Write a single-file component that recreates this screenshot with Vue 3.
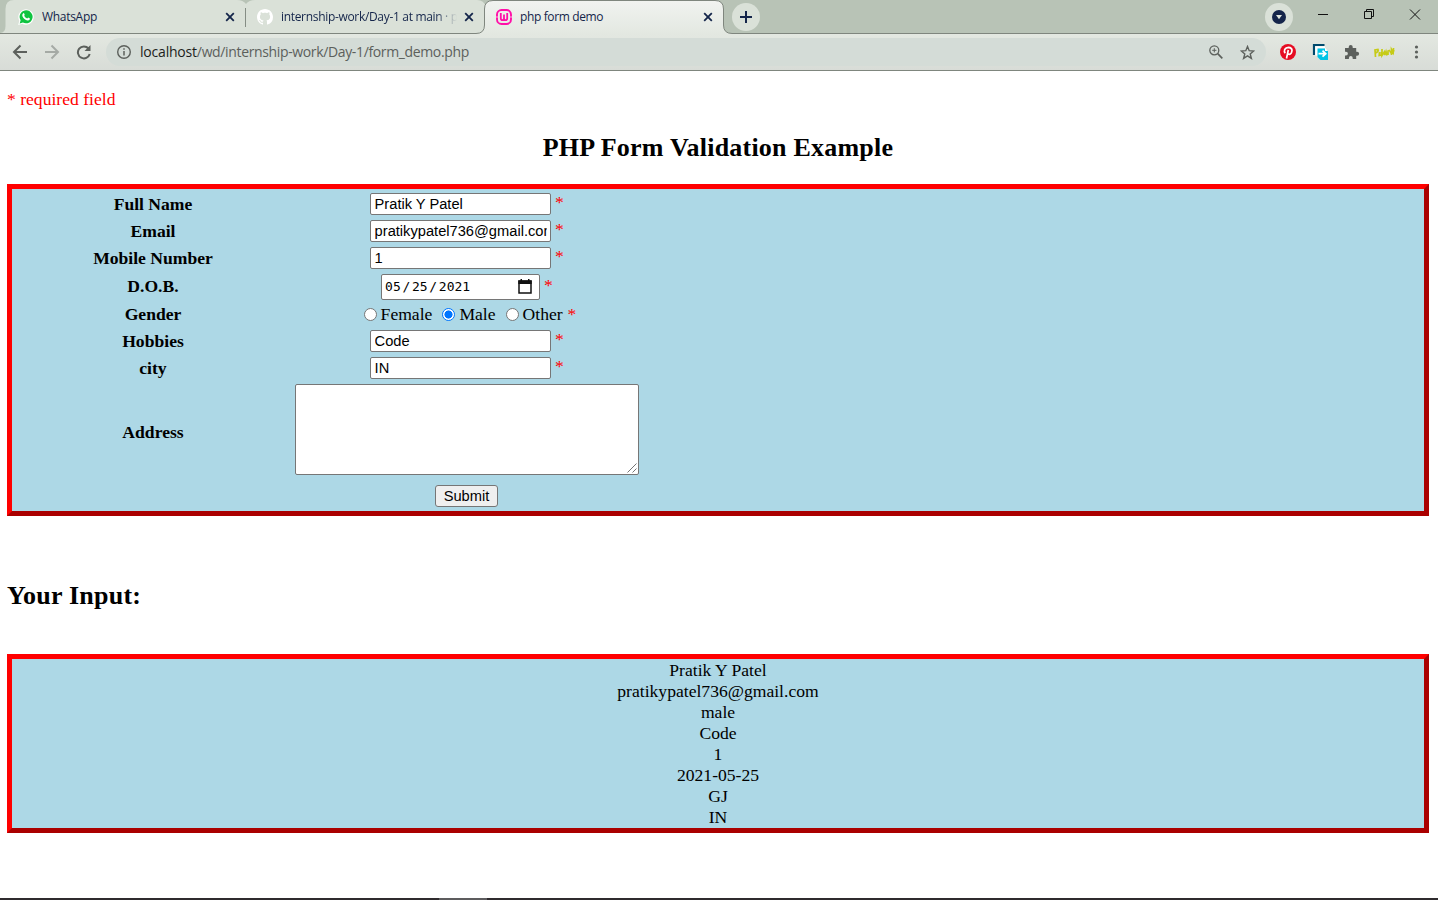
<script setup>
const before = [
  { label: 'Full Name', value: 'Pratik Y Patel' },
  { label: 'Email', value: 'pratikypatel736@gmail.com' },
  { label: 'Mobile Number', value: '1' },
]
const after = [
  { label: 'Hobbies', value: 'Code' },
  { label: 'city', value: 'IN' },
]
const genders = [
  { name: 'Female', on: false },
  { name: 'Male', on: true },
  { name: 'Other', on: false },
]
const output = ['Pratik Y Patel', 'pratikypatel736@gmail.com', 'male', 'Code', '1', '2021-05-25', 'GJ', 'IN']
</script>

<template>
  <div class="screen">
    <header class="strip">
      <svg class="shapes" width="1438" height="34" viewBox="0 0 1438 34">
        <defs>
          <linearGradient id="activeTab" x1="0" y1="0" x2="0" y2="1">
            <stop offset="0" stop-color="#f1f3f0" />
            <stop offset="1" stop-color="#e3e8e1" />
          </linearGradient>
        </defs>
        <path d="M0 33Q5.500 33 5.500 26V9Q5.500 0 14 0H237Q243 0 246 4Q249 0 255 0H477Q484 0 486 7V33Z" fill="#dae1d8" />
        <path d="M245.500 8V27" stroke="#858d84" />
        <path d="M0 33.500H476Q484.500 33.500 484.500 25V9Q484.500 .5 493 .5H715Q723.500 .5 723.500 9V25Q723.500 33.500 732 33.500H1438V34H0Z" fill="url(#activeTab)" />
        <path d="M0 33.500H476Q484.500 33.500 484.500 25V9Q484.500 .5 493 .5H715Q723.500 .5 723.500 9V25Q723.500 33.500 732 33.500H1438" fill="none" stroke="#7f867e" />
      </svg>

      <div class="tab first">
        <svg class="fav" width="16" height="16" viewBox="0 0 16 16">
          <path d="M.2 15.900 1.300 11.800A7.700 7.700 0 1 1 4.300 14.800Z" fill="#fff" />
          <path d="M1.700 14.400 2.600 11.300A6.500 6.500 0 1 1 4.900 13.500Z" fill="#0fc440" />
          <path d="M5.200 4.200Q5.900 3.900 6.200 4.500L6.700 5.700Q6.800 6 6.100 6.800Q7.200 8.900 9.200 9.600L10 8.700Q10.200 8.500 10.600 8.700L11.900 9.400Q12.100 9.700 11.700 10.500Q11 11.500 9.700 11.400Q5.900 10.700 4.300 6.900Q4 5.200 5.200 4.200Z" fill="#fff" />
        </svg>
        <span class="title t1">WhatsApp</span>
        <svg class="close" width="10" height="10" viewBox="0 0 10 10"><path d="m1.200 1.200 7.600 7.600m0-7.600L1.200 8.800" /></svg>
      </div>
      <div class="tab second">
        <svg class="fav" width="16" height="16" viewBox="0 0 16 16">
          <path fill="#fff" d="M8 0C3.580 0 0 3.580 0 8c0 3.540 2.290 6.530 5.470 7.590.4.070.55-.17.55-.38 0-.19-.01-.82-.01-1.490-2.010.37-2.530-.49-2.690-.94-.09-.23-.48-.94-.82-1.130-.28-.15-.68-.52-.01-.53.63-.01 1.080.58 1.230.82.72 1.210 1.870.87 2.330.66.07-.52.28-.87.51-1.070-1.780-.2-3.640-.89-3.640-3.950 0-.87.31-1.590.82-2.150-.08-.2-.36-1.020.08-2.120 0 0 .67-.21 2.200.82.64-.18 1.320-.27 2-.27s1.360.09 2 .27c1.530-1.040 2.200-.82 2.200-.82.44 1.100.16 1.920.08 2.120.51.56.82 1.270.82 2.150 0 3.070-1.870 3.750-3.650 3.950.29.25.54.73.54 1.480 0 1.070-.01 1.930-.01 2.200 0 .21.15.46.55.38A8.010 8.010 0 0 0 16 8c0-4.420-3.580-8-8-8Z" />
        </svg>
        <span class="title t2">internship-work/Day-1 at main · p</span>
        <svg class="close" width="10" height="10" viewBox="0 0 10 10"><path d="m1.200 1.200 7.600 7.600m0-7.600L1.200 8.800" /></svg>
      </div>
      <div class="tab third">
        <svg class="fav" width="16" height="16" viewBox="0 0 16 16" fill="none" stroke="#ff0fa8">
          <rect x="1" y="1" width="14" height="14" rx="4.500" stroke-width="1.900" />
          <path d="M4.800 4V9.300Q4.800 11.200 6.400 11.200 8 11.200 8 9.500V5.500V9.500Q8 11.200 9.600 11.200 11.200 11.200 11.200 9.300V4" stroke-width="1.800" />
          <path d="M0 8h2M14 8h2" stroke="#f4dfec" stroke-width=".8" />
        </svg>
        <span class="title t3">php form demo</span>
        <svg class="close" width="10" height="10" viewBox="0 0 10 10"><path d="m1.200 1.200 7.600 7.600m0-7.600L1.200 8.800" /></svg>
      </div>
      <div class="round plus">
        <svg width="12" height="12" viewBox="0 0 12 12"><path d="M6 0v12M0 6h12" stroke="#14254a" stroke-width="2" /></svg>
      </div>
      <div class="round account">
        <svg width="14" height="14" viewBox="0 0 14 14"><circle cx="7" cy="7" r="7" fill="#14254a" /><path d="M4 5h6L7 9.300Z" fill="#dfe6dd" /></svg>
      </div>
      <svg class="winctl" width="104" height="14" viewBox="0 0 104 14" fill="none" stroke="#111">
        <path d="M0 6.500h10M46.500 3.500h7v7h-7zM48.500 3.500v-2h7v7h-2M92 1.500l10 10M102 1.500l-10 10" />
      </svg>
    </header>

    <div class="toolbar">
      <svg class="nav" width="80" height="16" viewBox="0 0 80 16" fill="none" stroke="#5c605c" stroke-width="2">
        <path d="M15 8H2.500M8.500 1.500 2 8 8.500 14.500" />
        <path d="M33 8H45.500M39.500 1.500 46 8 39.500 14.500" stroke="#a5aaa5" />
        <path d="M76.500 4.500A6 6 0 1 0 77.700 10" />
        <path d="M78.500 1v6h-6z" fill="#5c605c" stroke="none" />
      </svg>
      <div class="omnibox">
        <svg width="14" height="14" viewBox="0 0 14 14" fill="none" stroke="#5c605c">
          <circle cx="7" cy="7" r="6.300" stroke-width="1.400" /><path d="M7 6v4.500M7 3.300v1.500" stroke-width="1.500" />
        </svg>
        <span class="url"><b>localhost</b>/wd/internship-work/Day-1/form_demo.php</span>
        <svg class="zoom" width="14" height="14" viewBox="0 0 14 14" fill="none" stroke="#5c605c">
          <circle cx="5.300" cy="5.300" r="4.500" stroke-width="1.300" /><path d="m8.700 8.700 4.600 4.600" stroke-width="1.700" /><path d="M5.300 3.200v4.200M3.200 5.300h4.200" />
        </svg>
        <svg class="star" width="15" height="15" viewBox="0 0 15 15" fill="none" stroke="#5c605c" stroke-width="1.400">
          <path d="m7.500 1.500 1.700 4.200 4.500.3-3.500 2.900 1.200 4.500-3.900-2.500-3.900 2.500 1.200-4.500L1.300 6l4.500-.3Z" />
        </svg>
      </div>
      <svg class="ext" width="140" height="18" viewBox="0 0 140 18">
        <circle cx="8" cy="9" r="8" fill="#e60c22" />
        <path d="M6.500 15.500 8.300 7M5.300 10.200Q3.800 8.600 4.700 6.500 5.800 4.300 8.500 4.300 12 4.500 12 7.500 11.700 11 9.200 11.300 7.600 11.200 7.400 10.200" fill="none" stroke="#fff" stroke-width="1.700" />
        <path d="M34 12V2h10.500" fill="none" stroke="#004a6d" stroke-width="2.200" />
        <path d="M35.200 3.200H45V5.500H38v7h-2.800Z" fill="#fff" />
        <path d="M37.500 5.500H45L48 8v9H40.500L37.500 14Z" fill="#00c4e6" />
        <path d="M45 4.500v3.500h3z" fill="#fff" />
        <path d="M38.500 10.700h7M42.500 7.700l3.200 3-3.200 3" fill="none" stroke="#fff" stroke-width="1.800" />
        <path d="M65 5h3.700V4a2 2 0 0 1 4 0v1h3.500v3.700h.9a2 2 0 0 1 0 4h-.9V16h-3.500v-1a1.900 1.900 0 0 0-3.800 0v1H65v-3.500h1a1.900 1.900 0 0 0 0-3.800h-1Z" fill="#5c605c" />
        <path d="M95.500 14 95 7l3-.5q.8 2-2.300 3.500M99.500 9l-.3 3.500 2-.5.200-3M102 6v6.500l2.300-3.500.5 3 1.200-3.500 1 4M108 12V8l2-.8M111.500 12V6.500l1.700 3 .3-4.500M110 8l1 2M112.500 11 114 7" fill="none" stroke="#c6cb16" stroke-width="1.700" />
        <g fill="#5c605c"><circle cx="136.500" cy="4" r="1.600" /><circle cx="136.500" cy="9" r="1.600" /><circle cx="136.500" cy="14" r="1.600" /></g>
      </svg>
    </div>

    <main class="page">
      <p class="required">* required field</p>
      <h2 class="heading">PHP Form Validation Example</h2>

      <div class="panel form">
        <template v-for="f in before" :key="f.label">
          <div class="label">{{ f.label }}</div>
          <div class="cell"><span class="input"><span class="value">{{ f.value }}</span></span><i>*</i></div>
        </template>
        <div class="label raised">D.O.B.</div>
        <div class="cell">
          <span class="input date">
            <span class="digits"><span>05</span><span>/</span><span>25</span><span>/</span><span>2021</span></span>
            <svg class="calendar" width="14" height="15" viewBox="0 0 14 15"><path d="M1 2h12v12H1z" fill="#fff" stroke="#111" stroke-width="1.500" /><path d="M.3 1.500h13.400V5H.3zM2.500 0H4v2H2.500zM10 0h1.500v2H10z" fill="#111" /></svg>
          </span><i>*</i>
        </div>
        <div class="label raised">Gender</div>
        <div class="cell genders">
          <span v-for="g in genders" :key="g.name" class="choice"><span class="radio" :class="{ on: g.on }"></span>{{ g.name }}</span><i>*</i>
        </div>
        <template v-for="f in after" :key="f.label">
          <div class="label">{{ f.label }}</div>
          <div class="cell"><span class="input"><span class="value">{{ f.value }}</span></span><i>*</i></div>
        </template>
        <div class="label address">Address</div>
        <div class="area">
          <svg width="10" height="10" viewBox="0 0 10 10"><path d="M.5 9.500l9-9M5.500 9.500l4-4" stroke="#666" stroke-width=".9" /></svg>
        </div>
        <div class="cell submit"><span class="button">Submit</span></div>
      </div>

      <h2 class="result">Your Input:</h2>
      <div class="panel output">
        <div v-for="o in output" :key="o">{{ o }}</div>
      </div>
    </main>
    <footer class="taskbar"><span></span></footer>
  </div>
</template>

<style>
body { margin: 0; overflow: hidden; }
</style>

<style scoped>
.screen { width: 1438px; height: 900px; display: flex; flex-direction: column; background: #fff; overflow: hidden; }
.screen * { box-sizing: border-box; }
svg { display: block; flex: none; }

.strip { position: relative; height: 34px; flex: none; display: flex; align-items: flex-start; background: #b8c3b6; font: 12px "Open Sans", sans-serif; color: #14254a; }
.shapes { position: absolute; left: 0; top: 0; }
.tab { position: relative; height: 34px; display: flex; align-items: center; }
.first { width: 246px; padding: 0 11px 0 18px; }
.second { width: 239px; padding: 0 11px 0 11px; }
.third { width: 239px; padding: 0 11px 0 11px; }
.title { flex: 1; white-space: nowrap; overflow: hidden; line-height: 18px; }
.t1 { margin-left: 8px; letter-spacing: -.3px; }
.t2 { margin-left: 8px; margin-right: 7px; letter-spacing: -.32px; -webkit-mask-image: linear-gradient(90deg, #000 88%, transparent 100%); mask-image: linear-gradient(90deg, #000 88%, transparent 100%); }
.t3 { margin-left: 8px; letter-spacing: -.37px; }
.close { fill: none; stroke: #14254a; stroke-width: 1.8; }
.round { position: relative; width: 28px; height: 28px; margin-top: 3px; border-radius: 50%; background: #dae1d8; display: flex; align-items: center; justify-content: center; }
.plus { margin-left: 8px; }
.account { margin-left: 505px; }
.winctl { position: relative; margin: 8px 0 0 25px; }

.toolbar { height: 37px; flex: none; display: flex; align-items: center; border-bottom: 1px solid #7f867e; background: linear-gradient(#e3e8e1, #d8dcd7); }
.nav { margin-left: 12px; }
.omnibox { width: 1160px; height: 28px; margin-left: 14px; padding: 0 11px; border-radius: 14px; display: flex; align-items: center; background: #d4dcd7; }
.url { flex: 1; margin-left: 9px; font: 14px/20px "Open Sans", sans-serif; letter-spacing: -.36px; color: #5c605c; white-space: nowrap; }
.url b { font-weight: 400; color: #1c1e1c; letter-spacing: -.2px; }
.zoom { margin-right: 17px; }
.ext { margin-left: 14px; }

.page { flex: 1; padding: 0 9px 0 7px; font: 17.6px/20px "Liberation Serif", "Times New Roman", serif; color: #000; }
.required { margin: 18px 0 0; color: #f00; }
.heading { margin: 24px 0 0; font-size: 26px; line-height: 30px; text-align: center; letter-spacing: .22px; }
.panel { border: 5px solid; border-color: #f00 #a00 #a00 #f00; background: #add8e6; }
.form { margin-top: 21px; height: 332px; padding: 4px 0 4px 2px; display: grid; grid-template-columns: 278px 344px; grid-template-rows: 22px 22px 22px 26px 20px 22px 22px 91px 27px; gap: 5px 3px; }
.label { display: flex; align-items: center; justify-content: center; font-weight: 700; }
.raised { padding-bottom: 2px; }
.address { padding-top: 4px; }
.cell { display: flex; align-items: center; justify-content: center; }
.cell i { margin-left: 4px; padding-bottom: 4px; font-style: normal; color: #f00; }
.input { width: 181px; height: 22px; padding: 0 3px 0 3.500px; border: 1px solid #767676; border-radius: 2px; background: #fff; font: 14.67px/20px "Liberation Sans", Arial, sans-serif; white-space: nowrap; }
.value { display: block; overflow: hidden; }
.date { width: 159px; height: 26px; padding: 0 7px 0 3px; display: flex; align-items: center; justify-content: space-between; font: 13px/24px "DejaVu Sans Mono", monospace; }
.digits { display: flex; gap: 1.700px; }
.calendar { margin-bottom: 2px; }
.genders { padding: 0 0 2px 6px; }
.cell.genders i { margin-left: 5px; padding-bottom: 0; }
.choice { display: flex; align-items: center; margin-right: 10px; }
.choice:last-of-type { margin-right: 0; }
.radio { width: 13px; height: 13px; margin-right: 4px; border: 1px solid #767676; border-radius: 50%; background: #fff; }
.radio.on { border-color: #0075ff; background: radial-gradient(circle, #0075ff 0 3.800px, #fff 4.300px); }
.area { border: 1px solid #767676; border-radius: 2px; background: #fff; display: flex; align-items: flex-end; justify-content: flex-end; padding: 1px; }
.submit { grid-column: 2; align-items: flex-end; padding-right: 1px; }
.button { width: 63px; height: 22px; border: 1px solid #767676; border-radius: 3px; background: #efefef; font: 14.67px/20px "Liberation Sans", Arial, sans-serif; text-align: center; }
.result { margin: 65px 0 0; font-size: 26px; line-height: 30px; letter-spacing: .22px; }
.output { margin-top: 43px; height: 179px; padding-top: 1px; text-align: center; line-height: 21px; }
.taskbar { height: 2px; flex: none; background: #2f2b2e; }
.taskbar span { display: block; width: 48px; height: 2px; margin-left: 439px; background: #5d5c5e; }
</style>
